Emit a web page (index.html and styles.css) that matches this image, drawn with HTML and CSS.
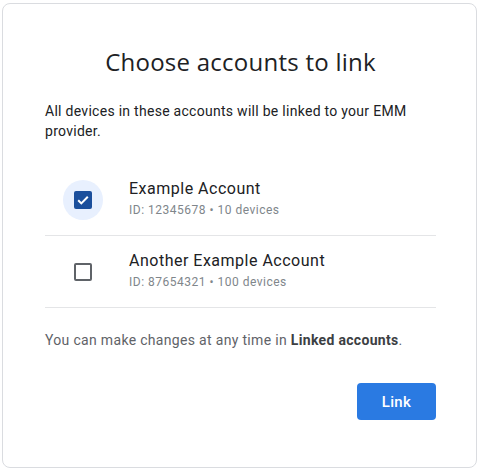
FILE: index.html
```html
<!DOCTYPE html>
<html>
<head>
<meta charset="utf-8">
<link rel="stylesheet" href="styles.css">
</head>
<body>
<div class="card">
  <h1 class="title">Choose accounts to link</h1>
  <p class="intro">All devices in these accounts will be linked to your EMM provider.</p>
  <ul class="accounts">
    <li class="account">
      <span class="check-wrap checked">
        <span class="box">
          <svg viewBox="0 0 18 18" width="18" height="18"><path d="M4.2 9.3l3.1 3.1 6.5-6.6" fill="none" stroke="#fff" stroke-width="2"/></svg>
        </span>
      </span>
      <div class="info">
        <div class="name">Example Account</div>
        <div class="meta">ID: 12345678 • 10 devices</div>
      </div>
    </li>
    <li class="account">
      <span class="check-wrap">
        <span class="box empty"></span>
      </span>
      <div class="info">
        <div class="name">Another Example Account</div>
        <div class="meta">ID: 87654321 • 100 devices</div>
      </div>
    </li>
  </ul>
  <p class="note">You can make changes at any time in <b>Linked accounts</b>.</p>
  <div class="actions">
    <button class="link-btn">Link</button>
  </div>
</div>
</body>
</html>
```
FILE: styles.css
```css
* { box-sizing: border-box; }
html, body { margin: 0; padding: 0; background: #fff; }
body { font-family: Roboto, "Liberation Sans", sans-serif; color: #202124; }

.card {
  width: 475px;
  margin: 3px 0 0 2px;
  border: 1px solid #dadce0;
  border-radius: 8px;
  padding: 42px 40px 47px 42px;
}

.title {
  margin: 0;
  font-family: "Open Sans", Roboto, sans-serif;
  font-weight: 400;
  font-size: 24px;
  line-height: 32px;
  letter-spacing: 0.25px;
  text-align: center;
  color: #202124;
}

.intro {
  margin: 23px 0 0;
  font-size: 14px;
  line-height: 20px;
  letter-spacing: 0.28px;
  color: #202124;
}

.accounts {
  list-style: none;
  margin: 23px 0 0;
  padding: 0;
}

.account {
  display: flex;
  align-items: center;
  height: 72px;
  border-bottom: 1px solid #e4e5e7;
}

.check-wrap {
  width: 40px;
  height: 40px;
  margin-left: 18px;
  margin-right: 26px;
  border-radius: 50%;
  display: flex;
  align-items: center;
  justify-content: center;
  flex: none;
}
.check-wrap.checked { background: #e8f0fe; }

.box {
  width: 18px;
  height: 18px;
  border-radius: 2px;
  background: #1b4f9c;
  display: flex;
}
.box.empty {
  background: #fff;
  border: 2px solid #5f6368;
}

.info { display: flex; flex-direction: column; }
.name { font-size: 16px; line-height: 22px; letter-spacing: 0.5px; color: #202124; margin-top: -1px; }
.meta { font-size: 12px; line-height: 20px; letter-spacing: 0.5px; color: #80868b; }

.note {
  margin: 22px 0 0;
  font-size: 14px;
  line-height: 20px;
  letter-spacing: 0.32px;
  color: #5f6368;
}
.note b { color: #3c4043; font-weight: 700; }

.actions {
  display: flex;
  justify-content: flex-end;
  margin-top: 33px;
}

.link-btn {
  width: 79px;
  height: 37px;
  border: none;
  border-radius: 4px;
  background: #2a7ae2;
  color: #fff;
  font-family: Roboto, sans-serif;
  font-weight: 500;
  font-size: 15px;
  letter-spacing: 0.3px;
  padding: 0;
}
```
